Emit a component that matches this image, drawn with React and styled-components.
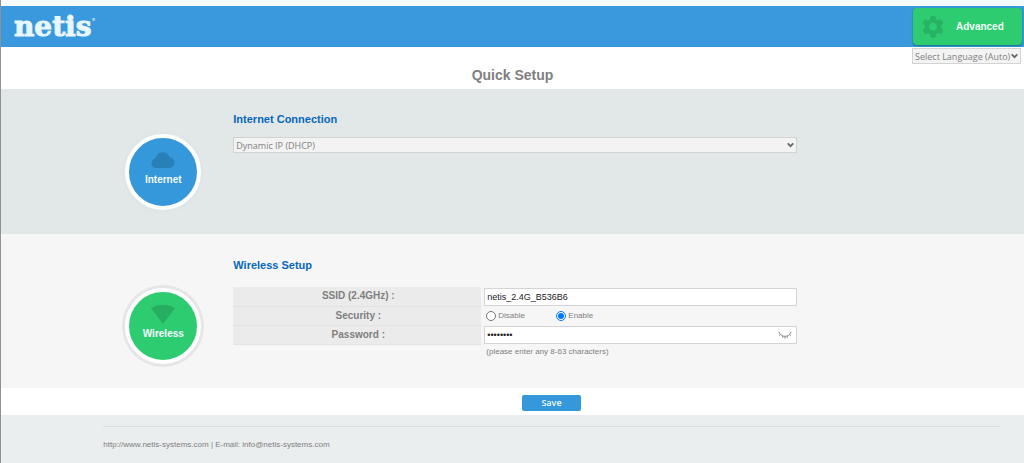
import React, {useState} from 'react';
import styled, {createGlobalStyle} from "styled-components";

const GlobalStyle = createGlobalStyle`
* {
    box-sizing: border-box;
}
body {
    margin: 0;
    background: #eaeeef;
    color: #7f7f7f;
    font-family: "Liberation Sans", Arial, sans-serif;
    font-size: 8px;
}
`;

const Page = styled.div`
    min-height: 100vh;
    display: flex;
    flex-direction: column;
    border-left: 1px solid #8f9294;
`;

const TopStrip = styled.div`
    height: 6px;
    background: #f5fbfc;
`;

const Header = styled.header`
    height: 41px;
    display: flex;
    align-items: center;
    justify-content: space-between;
    padding: 0 2px 0 13px;
    background: #3999dc;
`;

const Logo = styled.a`
    display: flex;
    align-items: flex-start;
    color: #e8f6fd;
    font-family: "DejaVu Serif", serif;
    font-size: 28px;
    font-weight: bold;
    line-height: 42px;
    text-decoration: none;
    -webkit-text-stroke: 1px #e8f6fd;
    sup {
        font-size: 4px;
        line-height: 28px;
        vertical-align: top;
        -webkit-text-stroke: 0;
    }
`;

const AdvancedButton = styled.button`
    width: 109px;
    height: 37px;
    display: flex;
    align-items: center;
    gap: 11px;
    padding: 0 8px;
    border: 0;
    border-radius: 4px;
    background: #2ecc71;
    box-shadow: 0 1px 2px rgba(0, 80, 60, 0.6);
    color: #f2fff6;
    font-family: "Liberation Sans", Arial, sans-serif;
    font-size: 10px;
    font-weight: bold;
    cursor: pointer;
`;

const TitleBar = styled.div`
    height: 42px;
    display: grid;
    grid-template-columns: 1fr auto 1fr;
    align-items: start;
    padding-top: 1px;
    background: #ffffff;
`;

const Title = styled.h1`
    grid-column: 2;
    margin: 0;
    padding-top: 18px;
    font-size: 14px;
    line-height: 18px;
`;

const SelectBox = styled.div`
    display: grid;
    align-items: center;
    border: 1px solid #d2d4d4;
    background: #f3f3f3;
    select, svg {
        grid-area: 1 / 1;
    }
    select {
        width: 100%;
        height: 14px;
        padding: 0 16px 0 2px;
        appearance: none;
        border: 0;
        border-radius: 0;
        background: transparent;
        color: #7f7f7f;
        font-family: "Open Sans", "Noto Sans", sans-serif;
        font-size: 9px;
    }
    svg {
        justify-self: end;
        margin-right: 2px;
        pointer-events: none;
    }
`;

const LanguageBox = styled(SelectBox)`
    width: 109px;
    justify-self: end;
    margin-right: 3px;
    select {
        padding-right: 0;
    }
`;

const Section = styled.section`
    min-height: ${props => props.$height};
    display: grid;
    grid-template-columns: 130px minmax(0, 564px);
    align-items: start;
    padding: ${props => props.$top} 24px 0 10%;
    background: ${props => props.$background};
`;

const Badge = styled.div`
    width: 76px;
    height: 76px;
    display: flex;
    flex-direction: column;
    align-items: center;
    gap: 3px;
    margin: ${props => props.$top} 0 0 22px;
    padding-top: 12px;
    border: 4px solid #ffffff;
    border-radius: 50%;
    background: ${props => props.$color};
    box-shadow: 0 0 0 3px ${props => props.$ring};
    color: #f4fbff;
    font-size: 10px;
    font-weight: bold;
    line-height: 14px;
`;

const SectionTitle = styled.h2`
    margin: 0 0 10px;
    color: #0568bd;
    font-size: 11px;
    line-height: 16px;
`;

const FormTable = styled.table`
    width: 100%;
    margin-top: 14px;
    border-collapse: collapse;
    table-layout: fixed;
    th {
        width: 248px;
        height: 19px;
        padding: 0 0 0 2px;
        border-bottom: 1px solid #e2e2e2;
        background: #ebebeb;
        font-size: 10px;
        line-height: 18px;
        text-align: center;
    }
    td {
        padding: 0 0 0 3px;
    }
`;

const FieldBox = styled.div`
    height: 18px;
    display: flex;
    align-items: center;
    padding: 0 4px 0 2px;
    border: 1px solid #d4d4d4;
    background: #ffffff;
`;

const TextInput = styled.input`
    flex: 1;
    min-width: 0;
    height: 16px;
    padding: 0;
    border: 0;
    outline: 0;
    background: transparent;
    color: #222222;
    font-family: "Liberation Sans", Arial, sans-serif;
    font-size: 9px;
`;

const EyeButton = styled.button`
    display: flex;
    padding: 0;
    border: 0;
    background: transparent;
    cursor: pointer;
`;

const RadioGroup = styled.div`
    display: grid;
    grid-template-columns: 70px auto;
    justify-content: start;
    padding-left: 2px;
`;

const RadioLabel = styled.label`
    display: flex;
    align-items: center;
    gap: 2px;
    input {
        width: 10px;
        height: 10px;
        margin: 0;
    }
`;

const Hint = styled.div`
    padding: 2px 0 0 2px;
    line-height: 12px;
`;

const SaveBar = styled.div`
    height: 27px;
    display: flex;
    justify-content: center;
    align-items: center;
    padding: 2px 0 0 78px;
    background: #ffffff;
`;

const SaveButton = styled.button`
    width: 59px;
    height: 16px;
    padding: 0;
    border: 0;
    border-radius: 2px;
    background: #3498db;
    color: #f2faff;
    font-family: "Open Sans", "Noto Sans", sans-serif;
    font-size: 9px;
    font-weight: 600;
    line-height: 16px;
    cursor: pointer;
`;

const Footer = styled.footer`
    flex: 1;
    padding: 11px 24px 0 10%;
    background: #eaeeef;
`;

const FooterText = styled.div`
    padding-top: 12px;
    border-top: 1px solid #d9dddd;
    line-height: 12px;
    a {
        color: inherit;
        text-decoration: none;
    }
`;

const GearIcon = () => (
    <svg width="24" height="24" viewBox="0 0 24 24" fill="#28b363" aria-hidden="true">
        <path fillRule="evenodd" stroke="#28b363" strokeWidth="1" strokeLinejoin="round" d="M10 1.500h4l.6 3 2.400 1.300 3-1 2 3.400-2.300 2.100v2.800l2.300 2.100-2 3.400-3-1-2.400 1.300-.6 3.300h-4l-.6-3.300-2.400-1.300-3 1-2-3.400 2.300-2.100v-2.800L2 8.200l2-3.400 3 1 2.400-1.300zM12 7.300a4.400 4.400 0 1 0 0 8.800 4.400 4.400 0 0 0 0-8.800z" />
    </svg>
);

const ChevronIcon = () => (
    <svg width="7" height="6" viewBox="0 0 7 6" fill="none" stroke="#666666" strokeWidth="1.700" aria-hidden="true">
        <path d="M.7 1.300L3.500 4.200l2.800-2.900" />
    </svg>
);

const CloudIcon = () => (
    <svg width="24" height="20" viewBox="0 -2 24 20" fill="#2980b9" aria-hidden="true">
        <path d="M5.500 16C2.500 16 .500 13.800.500 11.200c0-2.400 1.700-4.300 4-4.700C5 3 8 .300 11.700.300c3.500 0 6 2 7 5 2.800.200 4.800 2.500 4.800 5.200 0 3.100-2.300 5.500-5.500 5.500z" />
    </svg>
);

const WifiIcon = () => (
    <svg width="26" height="20" viewBox="0 0 26 20" fill="#27ae60" aria-hidden="true">
        <path d="M1 4C8-.500 18-.500 25 4L13 20z" />
    </svg>
);

const ClosedEyeIcon = () => (
    <svg width="14" height="8" viewBox="0 0 14 8" fill="none" stroke="#8a8a8a" strokeWidth="1" aria-hidden="true">
        <path d="M.8.800c2 6 10.400 6 12.400 0M2.500 3.500L.900 4.500M4.900 5.200L4.300 6.900M7 5.500v2.200M9.100 5.200l.6 1.700M11.500 3.500l1.600 1" />
    </svg>
);

const App = () => {
    const [ssid, setSsid] = useState("netis_2.4G_B536B6");
    const [security, setSecurity] = useState("enable");
    const [password, setPassword] = useState("password");
    const [showPassword, setShowPassword] = useState(false);

    function securityHandler(event) {
        setSecurity(event.target.value);
    }

    return (
        <Page>
            <GlobalStyle />
            <TopStrip />
            <Header>
                <Logo href="/">netis<sup>®</sup></Logo>
                <AdvancedButton type="button"><GearIcon />Advanced</AdvancedButton>
            </Header>
            <TitleBar>
                <Title>Quick Setup</Title>
                <LanguageBox>
                    <select aria-label="Language">
                        <option>Select Language (Auto)</option>
                    </select>
                    <ChevronIcon />
                </LanguageBox>
            </TitleBar>

            <Section $height="145px" $top="22px" $background="#e2e7e7">
                <Badge $top="23px" $color="#3498db" $ring="#dfe6e8"><CloudIcon />Internet</Badge>
                <div>
                    <SectionTitle id="internet-title">Internet Connection</SectionTitle>
                    <SelectBox>
                        <select aria-labelledby="internet-title">
                            <option>Dynamic IP (DHCP)</option>
                        </select>
                        <ChevronIcon />
                    </SelectBox>
                </div>
            </Section>

            <Section $height="154px" $top="23px" $background="#f6f6f6">
                <Badge $top="31px" $color="#2ecc71" $ring="#e6e6e6"><WifiIcon />Wireless</Badge>
                <div>
                    <SectionTitle>Wireless Setup</SectionTitle>
                    <FormTable>
                        <tbody>
                            <tr>
                                <th scope="row"><label htmlFor="ssid">SSID (2.4GHz) :</label></th>
                                <td>
                                    <FieldBox>
                                        <TextInput id="ssid" type="text" value={ssid} onChange={e => setSsid(e.target.value)} />
                                    </FieldBox>
                                </td>
                            </tr>
                            <tr>
                                <th scope="row" id="security">Security :</th>
                                <td>
                                    <RadioGroup role="radiogroup" aria-labelledby="security">
                                        <RadioLabel>
                                            <input type="radio" name="security" value="disable" checked={security === "disable"} onChange={securityHandler} />
                                            Disable
                                        </RadioLabel>
                                        <RadioLabel>
                                            <input type="radio" name="security" value="enable" checked={security === "enable"} onChange={securityHandler} />
                                            Enable
                                        </RadioLabel>
                                    </RadioGroup>
                                </td>
                            </tr>
                            <tr>
                                <th scope="row"><label htmlFor="password">Password :</label></th>
                                <td>
                                    <FieldBox>
                                        <TextInput id="password" type={showPassword ? "text" : "password"} value={password} onChange={e => setPassword(e.target.value)} />
                                        <EyeButton type="button" aria-label="Show password" onClick={() => setShowPassword(!showPassword)}>
                                            <ClosedEyeIcon />
                                        </EyeButton>
                                    </FieldBox>
                                </td>
                            </tr>
                            <tr>
                                <td />
                                <td><Hint>(please enter any 8-63 characters)</Hint></td>
                            </tr>
                        </tbody>
                    </FormTable>
                </div>
            </Section>

            <SaveBar>
                <SaveButton type="button">Save</SaveButton>
            </SaveBar>

            <Footer>
                <FooterText>
                    <a href="http://www.netis-systems.com">http://www.netis-systems.com</a> | E-mail: <a href="mailto:info@netis-systems.com">info@netis-systems.com</a>
                </FooterText>
            </Footer>
        </Page>
    );
}

export default App;
